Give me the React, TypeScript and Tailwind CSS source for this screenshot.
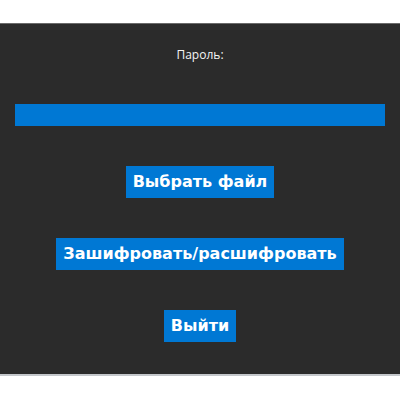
export default function App() {
  const btn =
    "h-8 px-[7px] bg-[#0078d4] text-white font-bold text-[16px] leading-none flex items-center justify-center";
  return (
    <div className="w-[400px] h-[400px] bg-white flex flex-col">
      <div className="h-[23px] shrink-0" />
      <div className="h-[353px] shrink-0 bg-[#2b2b2b] border-t border-[#6a6a6a] border-b-2 border-b-[#c4c7cb] flex flex-col items-center">
        <div
          className="mt-[23px] h-4 text-[12px] leading-4 text-[#f5f5f5]"
          style={{ fontFamily: '"Open Sans", "Noto Sans", sans-serif' }}
        >
          Пароль:
        </div>
        <div className="mt-[41px] h-[22px] w-[370px] bg-[#0078d4]" />
        <div
          className="mt-10 flex flex-col items-center gap-10"
          style={{ fontFamily: '"DejaVu Sans", sans-serif' }}
        >
          <button className={btn}>Выбрать файл</button>
          <button className={btn}>Зашифровать/расшифровать</button>
          <button className={btn}>Выйти</button>
        </div>
      </div>
    </div>
  );
}
